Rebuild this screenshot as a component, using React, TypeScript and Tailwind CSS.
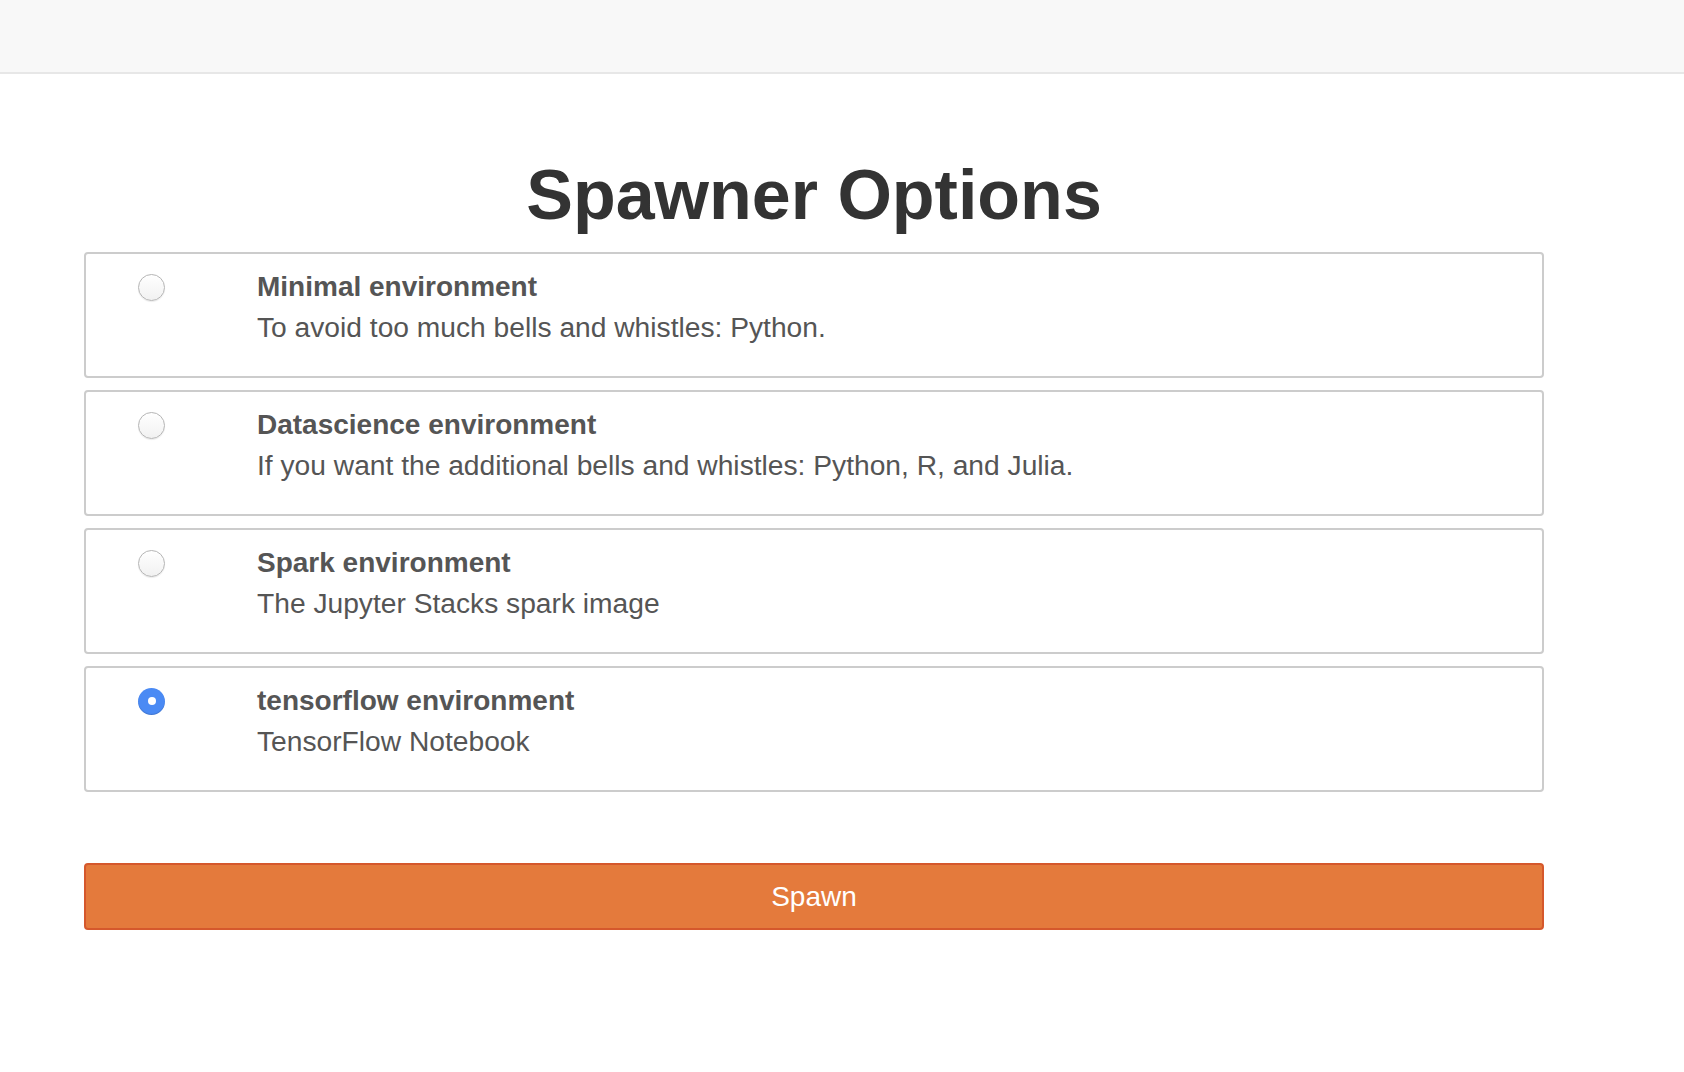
import { useState } from 'react';

const profiles = [
  { id: 'minimal', name: 'Minimal environment', description: 'To avoid too much bells and whistles: Python.' },
  { id: 'datascience', name: 'Datascience environment', description: 'If you want the additional bells and whistles: Python, R, and Julia.' },
  { id: 'spark', name: 'Spark environment', description: 'The Jupyter Stacks spark image' },
  { id: 'tensorflow', name: 'tensorflow environment', description: 'TensorFlow Notebook' },
];

export default function App() {
  const [selected, setSelected] = useState('tensorflow');

  return (
    <div className="min-h-screen bg-white font-['Liberation_Sans',Arial,sans-serif]">
      <nav className="h-[74px] bg-[#f8f8f8] border-b-2 border-[#e7e7e7]" />

      <div className="ml-[84px] w-[1460px]">
        <h1 className="mt-[83px] mb-[18px] text-center text-[70px] leading-[77px] font-bold text-[#333]">
          Spawner Options
        </h1>

        <div className="flex flex-col gap-[12px]">
          {profiles.map((profile) => {
            const checked = selected === profile.id;
            return (
              <label
                key={profile.id}
                className="flex cursor-pointer rounded-[4px] border-2 border-[#cccccc] pt-[13px] pb-[29px]"
                onClick={() => setSelected(profile.id)}
              >
                <div className="w-[171px] shrink-0 pl-[52px]">
                  <div className="flex h-[40px] items-center">
                    {checked ? (
                      <span className="flex h-[27px] w-[27px] items-center justify-center rounded-full bg-[#4a8af4] shadow-[inset_0_-1px_1px_rgba(0,0,0,0.15)]">
                        <span className="h-[8px] w-[8px] rounded-full bg-white" />
                      </span>
                    ) : (
                      <span className="h-[27px] w-[27px] rounded-full border border-[#b5b5b5] bg-gradient-to-b from-white to-[#f1f1f1] shadow-[0_1px_1px_rgba(0,0,0,0.08)]" />
                    )}
                  </div>
                </div>
                <div>
                  <div className="text-[28px] leading-[40px] font-bold text-[#555]">{profile.name}</div>
                  <div className="text-[28.2px] leading-[40px] text-[#555]">{profile.description}</div>
                </div>
              </label>
            );
          })}
        </div>

        <button className="mt-[71px] h-[67px] w-full rounded-[4px] border-2 border-[#d5582c] bg-[#e47a3c] text-[28px] text-white">
          Spawn
        </button>
      </div>
    </div>
  );
}
